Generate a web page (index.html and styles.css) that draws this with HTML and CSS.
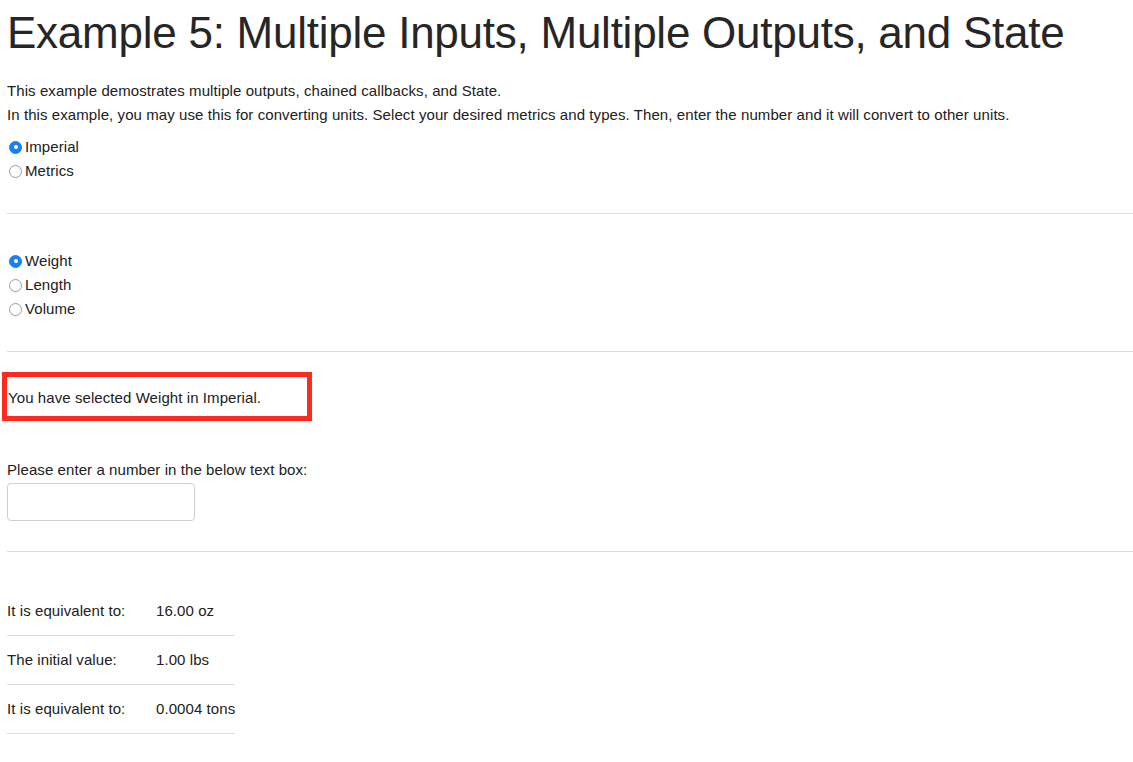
FILE: index.html
```html
<!DOCTYPE html>
<html>
<head>
<meta charset="utf-8">
<link rel="stylesheet" href="styles.css">
</head>
<body>
<div class="page">
  <h1 class="title">Example 5: Multiple Inputs, Multiple Outputs, and State</h1>
  <p class="line">This example demostrates multiple outputs, chained callbacks, and State.</p>
  <p class="line">In this example, you may use this for converting units. Select your desired metrics and types. Then, enter the number and it will convert to other units.</p>
  <div class="radios first">
    <label class="radio"><span class="dot on"></span>Imperial</label>
    <label class="radio"><span class="dot"></span>Metrics</label>
  </div>
  <hr class="rule rule-a">
  <div class="radios second">
    <label class="radio"><span class="dot on"></span>Weight</label>
    <label class="radio"><span class="dot"></span>Length</label>
    <label class="radio"><span class="dot"></span>Volume</label>
  </div>
  <hr class="rule rule-b">
  <div class="highlight">You have selected Weight in Imperial.</div>
  <p class="line prompt">Please enter a number in the below text box:</p>
  <div class="input"></div>
  <hr class="rule rule-c">
  <table class="results">
    <tr><td class="k">It is equivalent to:</td><td>16.00 oz</td></tr>
    <tr><td class="k">The initial value:</td><td>1.00 lbs</td></tr>
    <tr><td class="k">It is equivalent to:</td><td>0.0004 tons</td></tr>
  </table>
</div>
</body>
</html>
```
FILE: styles.css
```css
html, body { margin: 0; padding: 0; background: #fff; }
body {
  font-family: "Liberation Sans", Arial, sans-serif;
  font-size: 15px;
  letter-spacing: 0.08px;
  color: #212121;
  line-height: 24px;
}
.page { padding-left: 7px; overflow: hidden; }
.title {
  font-size: 44px;
  font-weight: 400;
  line-height: 52px;
  margin: 7px 0 0 0;
  letter-spacing: -0.25px;
  color: #262626;
}
.line { margin: 0; }
.title + .line { margin-top: 20px; }
.radios { display: flex; flex-direction: column; }
.radios.first { margin-top: 8px; }
.radio { display: flex; align-items: center; height: 24px; }
.dot {
  width: 13px; height: 13px; box-sizing: border-box;
  border: 1px solid #9b9b9b; border-radius: 50%;
  margin: 0 3px 0 2px; background: #fff;
  display: inline-flex; align-items: center; justify-content: center;
}
.dot.on { background: #1a7ef5; border-color: #1a7ef5; }
.dot.on::after { content: ""; width: 4px; height: 4px; border-radius: 50%; background: #fff; }
.rule { border: 0; border-top: 1px solid #dcdcdc; margin: 0; }
.rule-a { margin-top: 30px; }
.radios.second { margin-top: 35px; }
.rule-b { margin-top: 30px; }
.highlight {
  margin: 20px 0 0 -5px;
  width: 299px;
  height: 36px;
  border: 5px solid #ff2a1f;
  padding: 3px 0 0 1px;
  display: flex; align-items: center;
  box-sizing: content-box;
}
.prompt { margin-top: 37px; }
.input {
  width: 186px; height: 36px;
  border: 1px solid #cfcfcf; border-radius: 4px;
  margin-top: 1px;
}
.rule-c { margin-top: 30px; }
.results { border-collapse: collapse; margin-top: 35px; }
.results td { padding: 12px 0; border-bottom: 1px solid #dcdcdc; line-height: 24px; }
.results td.k { width: 149px; }
```
